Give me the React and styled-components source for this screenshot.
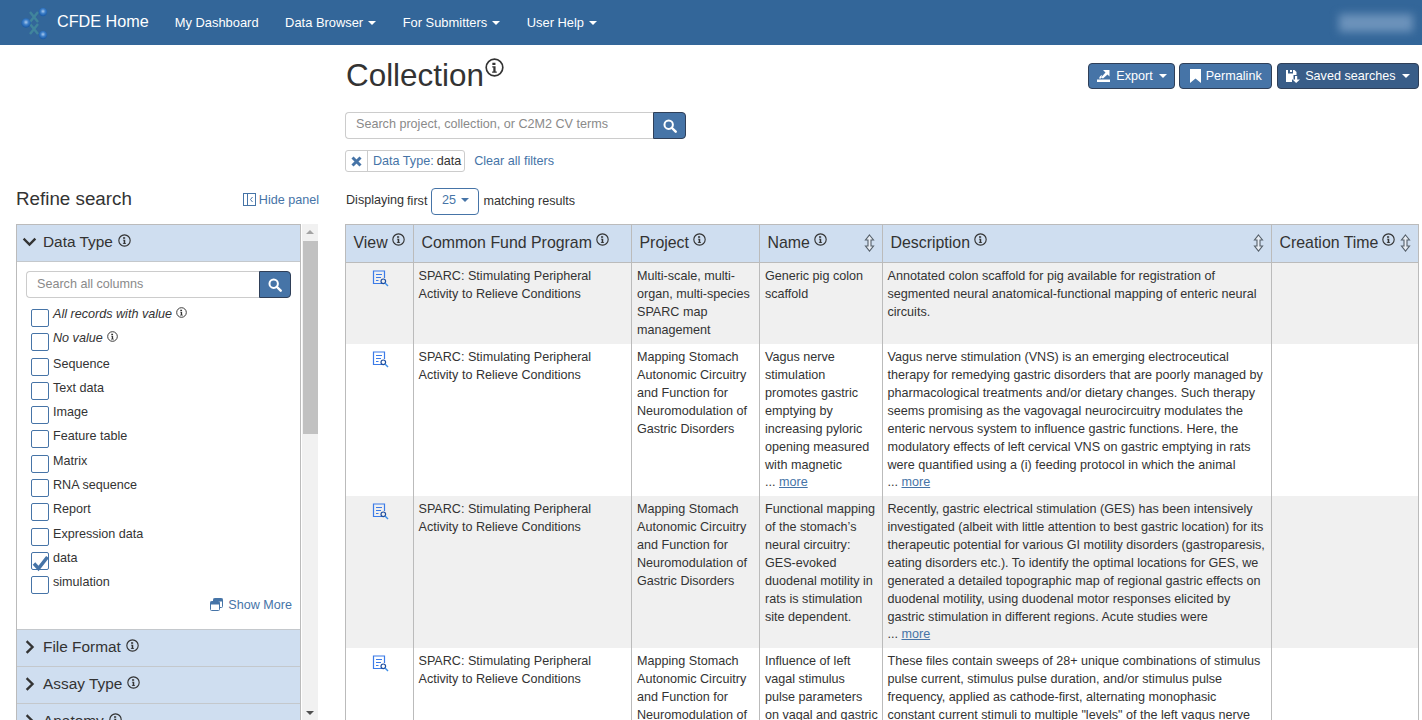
import React from 'react'
import styled, { createGlobalStyle } from 'styled-components'

const FACET_OPTIONS = [
  { label: 'All records with value', special: true, info: true },
  { label: 'No value', special: true, info: true },
  { label: 'Sequence' },
  { label: 'Text data' },
  { label: 'Image' },
  { label: 'Feature table' },
  { label: 'Matrix' },
  { label: 'RNA sequence' },
  { label: 'Report' },
  { label: 'Expression data' },
  { label: 'data', checked: true },
  { label: 'simulation' },
]

const COLUMNS = [
  { title: 'View', width: 68, info: true },
  { title: 'Common Fund Program', width: 218, info: true },
  { title: 'Project', width: 128, info: true },
  { title: 'Name', width: 123, info: true, sort: true },
  { title: 'Description', width: 389, info: true, sort: true },
  { title: 'Creation Time', width: 147, info: true, sort: true },
]

const PROGRAM = 'SPARC: Stimulating Peripheral\nActivity to Relieve Conditions'
const STOMACH = 'Mapping Stomach\nAutonomic Circuitry\nand Function for\nNeuromodulation of\nGastric Disorders'

const ROWS = [
  {
    project: 'Multi-scale, multi-\norgan, multi-species\nSPARC map\nmanagement',
    name: 'Generic pig colon\nscaffold',
    description: 'Annotated colon scaffold for pig available for registration of\nsegmented neural anatomical-functional mapping of enteric neural\ncircuits.',
  },
  {
    project: STOMACH,
    name: 'Vagus nerve\nstimulation\npromotes gastric\nemptying by\nincreasing pyloric\nopening measured\nwith magnetic',
    description: 'Vagus nerve stimulation (VNS) is an emerging electroceutical\ntherapy for remedying gastric disorders that are poorly managed by\npharmacological treatments and/or dietary changes. Such therapy\nseems promising as the vagovagal neurocircuitry modulates the\nenteric nervous system to influence gastric functions. Here, the\nmodulatory effects of left cervical VNS on gastric emptying in rats\nwere quantified using a (i) feeding protocol in which the animal',
    more: true,
  },
  {
    project: STOMACH,
    name: 'Functional mapping\nof the stomach\u2019s\nneural circuitry:\nGES-evoked\nduodenal motility in\nrats is stimulation\nsite dependent.',
    description: 'Recently, gastric electrical stimulation (GES) has been intensively\ninvestigated (albeit with little attention to best gastric location) for its\ntherapeutic potential for various GI motility disorders (gastroparesis,\neating disorders etc.). To identify the optimal locations for GES, we\ngenerated a detailed topographic map of regional gastric effects on\nduodenal motility, using duodenal motor responses elicited by\ngastric stimulation in different regions. Acute studies were',
    more: 'description',
  },
  {
    project: STOMACH,
    name: 'Influence of left\nvagal stimulus\npulse parameters\non vagal and gastric',
    description: 'These files contain sweeps of 28+ unique combinations of stimulus\npulse current, stimulus pulse duration, and/or stimulus pulse\nfrequency, applied as cathode-first, alternating monophasic\nconstant current stimuli to multiple "levels" of the left vagus nerve',
  },
]

const GlobalStyle = createGlobalStyle`
  html, body {
    margin: 0;
    height: 720px;
    overflow: hidden;
    background: #fff;
    color: #333;
    font-family: "Liberation Sans", Arial, sans-serif;
    font-size: 12.6px;
  }
  * { box-sizing: border-box; }
`

const Navbar = styled.nav`
  height: 45px;
  background: #336699;
  display: flex;
  align-items: center;
  color: #fff;
  padding-left: 21px;
`
const Brand = styled.a`
  display: flex;
  align-items: center;
  gap: 8px;
  font-size: 16.2px;
  margin-right: 26px;
  margin-top: -2px;
  svg {
    margin-top: 4px;
  }
`
const NavItem = styled.a`
  display: flex;
  align-items: center;
  font-size: 12.9px;
  margin-right: 26.5px;
  white-space: nowrap;
`
const Caret = styled.span`
  display: inline-block;
  width: 0;
  height: 0;
  margin-left: ${(p) => p.$gap || 5}px;
  border-left: 4.5px solid transparent;
  border-right: 4.5px solid transparent;
  border-top: 4.5px solid currentColor;
`
const UserName = styled.div`
  margin-left: auto;
  margin-right: 9px;
  width: 74px;
  height: 18px;
  background: #6d93bb;
  filter: blur(4px);
`

const Page = styled.div`
  display: flex;
  align-items: flex-start;
  padding-right: 3px;
`
const SideColumn = styled.aside`
  width: 345px;
  flex: none;
  padding: 142px 26px 0 16px;
`
const SideHead = styled.div`
  display: flex;
  justify-content: space-between;
  align-items: center;
  height: 24px;
  margin-bottom: 13px;
`
const SideTitle = styled.h2`
  margin: 0;
  font-size: 18.8px;
  font-weight: 400;
`
const LinkText = styled.a`
  color: #4674a7;
  display: inline-flex;
  align-items: center;
  gap: ${(p) => p.$gap || 0}px;
  white-space: nowrap;
`
const HidePanelLink = styled(LinkText)`
  padding-top: 1px;
  margin-left: auto;
`
const FacetBox = styled.div`
  display: flex;
  height: 496px;
  overflow: hidden;
`
const FacetList = styled.div`
  width: 285px;
  flex: none;
  border: 1px solid #bbb;
  border-bottom: 0;
`
const FacetHead = styled.div`
  display: flex;
  align-items: center;
  height: ${(p) => p.$height}px;
  padding: 0 0 2px 5px;
  background: #cfdef0;
  border-bottom: 1px solid #c4c8cc;
  font-size: 15.4px;
  gap: 6px;
  svg:last-child {
    margin: -4px 0 0 -1px;
  }
`
const FacetBody = styled.div`
  height: 368px;
  padding: 9px 9px 0;
  border-bottom: 1px solid #c4c8cc;
`
const SearchGroup = styled.div`
  display: flex;
  height: ${(p) => p.$height}px;
  width: ${(p) => p.$width};
`
const SearchInput = styled.div`
  flex: 1;
  display: flex;
  align-items: center;
  padding: 0 0 ${(p) => p.$lift}px 10px;
  border: 1px solid #ccc;
  border-right: 0;
  border-radius: 4px 0 0 4px;
  color: #8a8a8a;
  font-size: 12.6px;
`
const SearchButton = styled.button`
  width: ${(p) => p.$width}px;
  padding: 0;
  display: flex;
  align-items: center;
  justify-content: center;
  background: #4674a7;
  border: 1px solid #2f3f58;
  border-radius: 0 4px 4px 0;
`
const OptionList = styled.div`
  margin-top: 8px;
  padding-left: 5px;
`
const Option = styled.div`
  display: flex;
  gap: 4px;
  height: 24.3px;
  line-height: 14px;
`
const CheckBox = styled.span`
  position: relative;
  flex: none;
  width: 18px;
  height: 18px;
  margin-top: 3px;
  border: 1px solid #4674a7;
  border-radius: 2px;
  background: #fff;
`
const CheckMark = styled.svg`
  position: absolute;
  left: 0;
  top: 1px;
`
const OptionLabel = styled.span`
  font-style: ${(p) => (p.$special ? 'italic' : 'normal')};
  margin-top: ${(p) => (p.$special ? 1 : 2)}px;
  display: inline-flex;
  gap: 4px;
  align-items: flex-start;
  white-space: nowrap;
  height: 14px;
`
const ShowMore = styled.div`
  display: flex;
  justify-content: flex-end;
  margin: 0 -1px 0 0;
`
const ScrollTrack = styled.div`
  width: 16px;
  margin-left: 1px;
  flex: none;
  background: #f1f1f1;
  display: flex;
  flex-direction: column;
  align-items: center;
`
const ScrollArrow = styled.span`
  width: 0;
  height: 0;
  margin-top: ${(p) => (p.$down ? 'auto' : '6px')};
  margin-bottom: ${(p) => (p.$down ? '5px' : '0')};
  border-left: 4px solid transparent;
  border-right: 4px solid transparent;
  ${(p) => (p.$down ? 'border-top: 4px solid #505050;' : 'border-bottom: 4px solid #a3a3a3;')}
`
const ScrollThumb = styled.span`
  width: 15px;
  height: 193px;
  margin-top: 7px;
  background: #c1c1c1;
`

const Main = styled.main`
  flex: 1;
  min-width: 0;
`
const TitleRow = styled.div`
  display: flex;
  justify-content: space-between;
  align-items: flex-start;
  height: 67px;
  padding-top: 18px;
`
const Title = styled.h1`
  margin: -6px 0 0 1px;
  font-size: 31.4px;
  line-height: 38px;
  font-weight: 400;
  display: flex;
  align-items: flex-start;
  gap: 1px;
  svg {
    margin-top: 1px;
  }
`
const Actions = styled.div`
  display: flex;
  gap: 4.5px;
`
const ActionButton = styled.button`
  display: flex;
  align-items: center;
  gap: 5px;
  height: 26px;
  padding: 0 ${(p) => p.$pad}px 1px;
  background: ${(p) => (p.$dark ? '#395d88' : '#4674a7')};
  border: 1px solid #2f3f58;
  border-radius: 4px;
  color: #fff;
  font-family: inherit;
  font-size: 12.6px;
`
const FilterRow = styled.div`
  display: flex;
  align-items: center;
  gap: 9px;
  height: 22px;
  margin-top: 11px;
`
const Chip = styled.div`
  display: flex;
  height: 22px;
  border: 1px solid #ccc;
  border-radius: 3px;
`
const ChipClose = styled.span`
  width: 22px;
  display: flex;
  align-items: center;
  justify-content: center;
  border-right: 1px solid #ccc;
`
const ChipText = styled.span`
  display: flex;
  align-items: center;
  padding: 0 3px 0 5px;
  color: #4674a7;
  font-size: 12.6px;
  gap: 3px;
  b {
    font-weight: 400;
    color: #333;
  }
`
const ResultRow = styled.div`
  display: flex;
  align-items: center;
  height: 27px;
  margin-top: 16px;
  margin-bottom: 9px;
  gap: 4px;
`
const ResultText = styled.span`
  margin-top: ${(p) => -p.$raise}px;
  margin-left: ${(p) => p.$indent || 0}px;
`
const PageSize = styled.span`
  display: flex;
  align-items: center;
  justify-content: center;
  width: 48px;
  height: 27px;
  border: 1px solid #4674a7;
  border-radius: 4px;
  color: #4674a7;
  padding-bottom: 3px;
`
const ResultsTable = styled.table`
  width: 1073px;
  table-layout: fixed;
  border-collapse: collapse;
  border-top: 1px solid #bbb;
`
const HeadCell = styled.th`
  height: 38px;
  padding: 0 7.5px 2px;
  background: #cfdef0;
  border: 1px solid #bbb;
  font-size: 15.9px;
  font-weight: 400;
  text-align: left;
`
const HeadInner = styled.div`
  display: flex;
  align-items: center;
  justify-content: space-between;
  white-space: nowrap;
  gap: 4px;
`
const HeadLabel = styled.span`
  display: flex;
  align-items: flex-start;
  gap: 4px;
  svg {
    margin-top: -1px;
  }
`
const Row = styled.tr`
  background: ${(p) => (p.$alt ? '#f0f0f0' : '#fff')};
`
const Cell = styled.td`
  vertical-align: top;
  padding: 4px 4px 5px ${(p) => (p.$inset ? 5 : 4.5)}px;
  border-left: 1px solid #bbb;
  border-right: 1px solid #bbb;
  line-height: 18px;
  white-space: pre-line;
`
const ViewCell = styled(Cell)`
  text-align: center;
  padding-right: 3px;
  svg {
    display: inline-block;
    margin-top: 3px;
  }
`
const MoreLine = styled.span`
  display: block;
  line-height: 17px;
  a {
    color: #4674a7;
    text-decoration: underline;
  }
`

const InfoIcon = ({ size = 13, color = '#333' }) => (
  <svg width={size} height={size} viewBox="0 0 16 16" fill="none" style={{ flex: 'none' }}>
    <circle cx="8" cy="8" r="7" stroke={color} strokeWidth="1.4" />
    <path d="M6.2 4h2.6v1.9H6.2zM6.1 7h2.8v4.4h1v1H6v-1h1V8H6.100z" fill={color} />
  </svg>
)

const SearchIcon = ({ size = 14 }) => (
  <svg width={size} height={size} viewBox="0 0 16 16" fill="none">
    <circle cx="6.5" cy="6.500" r="4.800" stroke="#fff" strokeWidth="2.300" />
    <path d="M10 10l4.500 4.500" stroke="#fff" strokeWidth="2.800" strokeLinecap="round" />
  </svg>
)

const Chevron = ({ open }) => (
  <svg width="15" height="14" viewBox="0 0 15 14" fill="none" style={{ flex: 'none' }}>
    <path
      d={open ? 'M2.500 4.500l5 5 5-5' : 'M5.500 2l5 5-5 5'}
      stroke="#333"
      strokeWidth="2.400"
      strokeLinecap="square"
    />
  </svg>
)

const SortIcon = () => (
  <svg width="11" height="18" viewBox="0 0 11 18" fill="none" style={{ flex: 'none' }}>
    <path
      d="M5.500 1L9.500 6H7v6h2.500L5.500 17 1.500 12H4V6H1.500z"
      fill="#e8edf4"
      stroke="#56606a"
      strokeWidth="1.100"
    />
  </svg>
)

const ViewIcon = () => (
  <svg width="17" height="17" viewBox="0 0 17 17" fill="none">
    <path d="M10 13.500H1.500V1h11v7" stroke="#3b7be8" strokeWidth="1.200" />
    <path d="M4 4.500h6M4 7.500h5M4 10.500h2.500" stroke="#3b7be8" strokeWidth="1.200" />
    <circle cx="11.300" cy="11.300" r="2.300" stroke="#1f4e9e" strokeWidth="1.200" />
    <path d="M13 13l3 3" stroke="#3c8de8" strokeWidth="1.400" />
  </svg>
)

const LogoMark = () => (
  <svg width="28" height="36" viewBox="0 0 28 36">
    <defs>
      <radialGradient id="ball" cx="0.500" cy="0.420" r="0.550">
        <stop offset="0" stopColor="#a9c9ee" />
        <stop offset="0.500" stopColor="#3d7fc8" />
        <stop offset="1" stopColor="#1a5aa6" />
      </radialGradient>
    </defs>
    <path d="M9 6l8 10M17 6L9 16M9 18l8 10M17 18L9 28" stroke="#4a9a9e" strokeWidth="2.400" opacity="0.600" />
    <circle cx="5" cy="17" r="4.700" fill="url(#ball)" />
    <circle cx="22" cy="6" r="4.200" fill="url(#ball)" />
    <circle cx="22" cy="29" r="4.200" fill="url(#ball)" />
  </svg>
)

const ExportIcon = () => (
  <svg width="15" height="14" viewBox="0 0 15 14" fill="#fff">
    <path d="M1 10.500h13V13H1z" />
    <path d="M7 1h6.500v6.500l-2-2L7 9.500 5 8.500 9.500 3.500z" />
    <path d="M3 9.500c.5-2 1.500-3 3-3.500L5 9.500z" />
  </svg>
)

const BookmarkIcon = () => (
  <svg width="11" height="14" viewBox="0 0 11 14" fill="#fff">
    <path d="M0 0h11v14L5.500 9.500 0 14z" />
  </svg>
)

const SavedIcon = () => (
  <svg width="14" height="14" viewBox="0 0 14 14" fill="#fff">
    <path d="M0 1h2v3.500h5V1h1.500L10.500 3v3H7.500v4.500H6V13H0z" />
    <path d="M4 1h2v2H4z" />
    <path d="M9 7h2.200v3.500H14L10.100 14 6.500 10.500H9z" />
  </svg>
)

const HidePanelIcon = () => (
  <svg width="13" height="13" viewBox="0 0 13 13" fill="none" stroke="#4674a7">
    <rect x="0.500" y="0.500" width="12" height="12" />
    <path d="M4.500 0.500v12" />
    <path d="M9.500 4L7.500 6.500l2 2.500" />
  </svg>
)

const ShowMoreIcon = () => (
  <svg width="13" height="13" viewBox="0 0 13 13" fill="none">
    <rect x="3.500" y="0.500" width="9" height="9" rx="1" fill="#fff" stroke="#4674a7" />
    <rect x="3.500" y="0.500" width="9" height="3" fill="#4674a7" />
    <rect x="0.500" y="3.500" width="9" height="9" rx="1" fill="#fff" stroke="#4674a7" />
    <rect x="0.500" y="3.500" width="9" height="3" fill="#4674a7" />
  </svg>
)

const CrossIcon = () => (
  <svg width="11" height="11" viewBox="0 0 11 11" fill="none">
    <path d="M1.500 1.500l8 8M9.500 1.500l-8 8" stroke="#4674a7" strokeWidth="3" />
  </svg>
)

export default function App() {
  return (
    <>
      <GlobalStyle />
      <Navbar>
        <Brand>
          <LogoMark />
          CFDE Home
        </Brand>
        <NavItem>My Dashboard</NavItem>
        <NavItem>Data Browser<Caret /></NavItem>
        <NavItem>For Submitters<Caret /></NavItem>
        <NavItem>User Help<Caret /></NavItem>
        <UserName />
      </Navbar>
      <Page>
        <SideColumn>
          <SideHead>
            <SideTitle>Refine search</SideTitle>
            <HidePanelLink $gap={3}><HidePanelIcon />Hide panel</HidePanelLink>
          </SideHead>
          <FacetBox>
            <FacetList>
              <FacetHead $height={37}>
                <Chevron open />
                Data Type
                <InfoIcon />
              </FacetHead>
              <FacetBody>
                <SearchGroup $height={27}>
                  <SearchInput $lift={2}>Search all columns</SearchInput>
                  <SearchButton $width={32}><SearchIcon /></SearchButton>
                </SearchGroup>
                <OptionList>
                  {FACET_OPTIONS.map((item) => (
                    <Option key={item.label}>
                      <CheckBox>
                        {item.checked && (
                          <CheckMark width="18" height="18" viewBox="0 0 18 18">
                            <path d="M2 9.500l4.500 5L15.500 3" fill="none" stroke="#4674a7" strokeWidth="3.500" />
                          </CheckMark>
                        )}
                      </CheckBox>
                      <OptionLabel $special={item.special}>
                        {item.label}
                        {item.info && <InfoIcon size={11} />}
                      </OptionLabel>
                    </Option>
                  ))}
                </OptionList>
                <ShowMore>
                  <LinkText $gap={5}><ShowMoreIcon />Show More</LinkText>
                </ShowMore>
              </FacetBody>
              <FacetHead $height={37}>
                <Chevron />
                File Format
                <InfoIcon />
              </FacetHead>
              <FacetHead $height={37}>
                <Chevron />
                Assay Type
                <InfoIcon />
              </FacetHead>
              <FacetHead $height={37}>
                <Chevron />
                Anatomy
                <InfoIcon />
              </FacetHead>
            </FacetList>
            <ScrollTrack>
              <ScrollArrow />
              <ScrollThumb />
              <ScrollArrow $down />
            </ScrollTrack>
          </FacetBox>
        </SideColumn>
        <Main>
          <TitleRow>
            <Title>Collection<InfoIcon size={19} /></Title>
            <Actions>
              <ActionButton $pad={7}><ExportIcon />Export<Caret $gap={1} /></ActionButton>
              <ActionButton $pad={9.5}><BookmarkIcon />Permalink</ActionButton>
              <ActionButton $dark $pad={8.5}><SavedIcon />Saved searches<Caret $gap={1} /></ActionButton>
            </Actions>
          </TitleRow>
          <SearchGroup $height={27} $width="341px">
            <SearchInput $lift={3}>Search project, collection, or C2M2 CV terms</SearchInput>
            <SearchButton $width={33}><SearchIcon /></SearchButton>
          </SearchGroup>
          <FilterRow>
            <Chip>
              <ChipClose><CrossIcon /></ChipClose>
              <ChipText>Data Type: <b>data</b></ChipText>
            </Chip>
            <LinkText>Clear all filters</LinkText>
          </FilterRow>
          <ResultRow>
            <ResultText $raise={4} $indent={1}>Displaying</ResultText>
            <ResultText $raise={2} $indent={-1}>first</ResultText>
            <PageSize>25<Caret /></PageSize>
            <ResultText $raise={2}>matching results</ResultText>
          </ResultRow>
          <ResultsTable>
            <colgroup>
              {COLUMNS.map((col) => (
                <col key={col.title} width={col.width} />
              ))}
            </colgroup>
            <thead>
              <tr>
                {COLUMNS.map((col) => (
                  <HeadCell key={col.title}>
                    <HeadInner>
                      <HeadLabel>
                        {col.title}
                        {col.info && <InfoIcon />}
                      </HeadLabel>
                      {col.sort && <SortIcon />}
                    </HeadInner>
                  </HeadCell>
                ))}
              </tr>
            </thead>
            <tbody>
              {ROWS.map((row, idx) => (
                <Row key={row.name} $alt={idx % 2 === 0}>
                  <ViewCell><ViewIcon /></ViewCell>
                  <Cell>{PROGRAM}</Cell>
                  <Cell $inset>{row.project}</Cell>
                  <Cell $inset>
                    {row.name}
                    {row.more === true && <MoreLine>... <a>more</a></MoreLine>}
                  </Cell>
                  <Cell>
                    {row.description}
                    {row.more && <MoreLine>... <a>more</a></MoreLine>}
                  </Cell>
                  <Cell />
                </Row>
              ))}
            </tbody>
          </ResultsTable>
        </Main>
      </Page>
    </>
  )
}
